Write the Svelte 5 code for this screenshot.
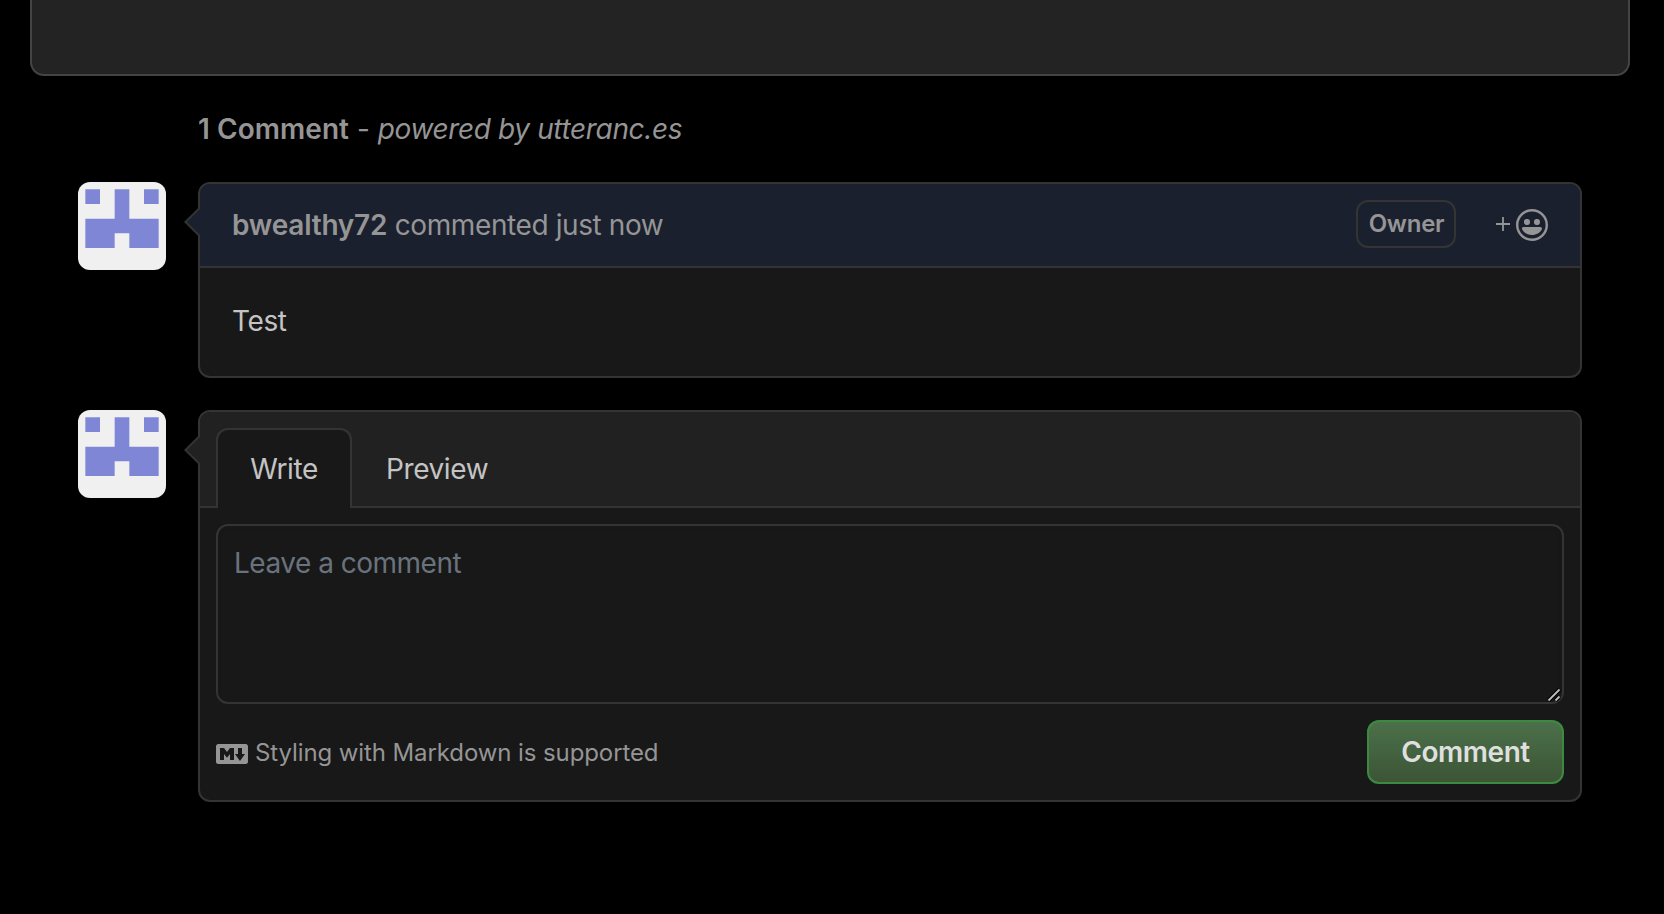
{#snippet avatar()}
  <svg class="avatar" viewBox="0 0 12 12" aria-hidden="true">
    <rect width="12" height="12" fill="#f0f0f0" />
    <path fill="#7f86d6" d="M1 1h2v2H1zM9 1h2v2H9zM5 1h2v4h4v4H7V7H5v2H1V5h4z" />
  </svg>
{/snippet}

{#snippet arrow(fill)}
  <svg class="arrow" width="16" height="30" viewBox="0 0 16 30" aria-hidden="true">
    <path d="M16 0.6L1.4 15L16 29.4" {fill} stroke="#343434" stroke-width="2" />
  </svg>
{/snippet}

<div class="page">
  <div class="article"></div>
  <main class="timeline">
    <h1><b>1 Comment</b> <span class="dash">-</span> <em>powered by utteranc.es</em></h1>

    <article class="entry">
      {@render avatar()}
      <div class="box">
        {@render arrow('#1b202f')}
        <header class="comment-header">
          <span class="meta"><b>bwealthy72</b> <span>commented just now</span></span>
          <span class="owner">Owner</span>
          <button class="react" aria-label="Add reaction">
            <svg width="14" height="14" viewBox="0 0 14 14"><path d="M6.1 0h1.8v6.1H14v1.8H7.9V14H6.1V7.9H0V6.1h6.1z" fill="currentColor" /></svg>
            <svg width="32" height="32" viewBox="0 0 16 16"><path fill="currentColor" d="M8 0C3.58 0 0 3.58 0 8s3.58 8 8 8 8-3.58 8-8-3.58-8-8-8zm4.81 12.81a6.72 6.72 0 0 1-2.17 1.45c-.83.36-1.72.53-2.64.53-.92 0-1.81-.17-2.64-.53-.81-.34-1.55-.83-2.17-1.45a6.773 6.773 0 0 1-1.45-2.17A6.59 6.59 0 0 1 1.21 8c0-.92.17-1.81.53-2.64.34-.81.83-1.55 1.45-2.17.62-.62 1.36-1.11 2.17-1.45A6.59 6.59 0 0 1 8 1.21c.92 0 1.81.17 2.64.53.81.34 1.55.83 2.17 1.45.62.62 1.11 1.36 1.45 2.17.36.83.53 1.72.53 2.64 0 .92-.17 1.81-.53 2.64-.34.81-.83 1.55-1.45 2.17zM4 6.8v-.59c0-.66.53-1.19 1.2-1.19h.59c.66 0 1.19.53 1.19 1.19v.59c0 .67-.53 1.2-1.19 1.2H5.2C4.53 8 4 7.47 4 6.8zm5 0v-.59c0-.66.53-1.19 1.2-1.19h.59c.66 0 1.19.53 1.19 1.19v.59c0 .67-.53 1.2-1.19 1.2h-.59C9.53 8 9 7.47 9 6.8zm4 3.2c-.72 1.88-2.91 3-5 3s-4.28-1.13-5-3c-.14-.39.23-1 .66-1h8.59c.41 0 .89.61.75 1z" /></svg>
          </button>
        </header>
        <div class="comment-body">Test</div>
      </div>
    </article>

    <article class="entry">
      {@render avatar()}
      <form class="box">
        {@render arrow('#212121')}
        <header class="tabs">
          <button type="button" class="tab active">Write</button>
          <button type="button" class="tab">Preview</button>
        </header>
        <div class="editor">
          <div class="field">
            <textarea placeholder="Leave a comment"></textarea>
            <svg class="grip" width="14" height="14" viewBox="0 0 14 14" aria-hidden="true"><path d="M1.5 12.5L12.5 1.5M8.5 12.5L12.5 8.5" stroke="#000" stroke-width="4" /><path d="M1.5 12.5L12.5 1.5M8.5 12.5L12.5 8.5" stroke="#bcbcbc" stroke-width="1.8" /></svg>
          </div>
          <footer>
            <span class="hint">
              <svg width="32" height="32" viewBox="0 0 16 16" aria-hidden="true"><path fill="currentColor" fill-rule="evenodd" d="M14.85 3H1.15C.52 3 0 3.52 0 4.15v7.69C0 12.48.52 13 1.15 13h13.69c.64 0 1.15-.52 1.15-1.15v-7.7C16 3.52 15.48 3 14.85 3zM9 11H7V8L5.5 9.92 4 8v3H2V5h2l1.5 2L7 5h2v6zm2.99.5L9.5 8H11V5h2v3h1.5l-2.51 3.5z" /></svg>
              <span>Styling with Markdown is supported</span>
            </span>
            <button type="button" class="submit">Comment</button>
          </footer>
        </div>
      </form>
    </article>
  </main>
</div>

<style>
  :global(body) { background: #000; }
  .page { box-sizing: border-box; height: 914px; overflow: hidden; padding: 0 34px 0 30px; background: #000; color: #c4c4c4; font: 28px/42px Inter, "Liberation Sans", sans-serif; letter-spacing: -0.4px; }
  .page :global(*) { box-sizing: border-box; }
  .article { height: 76px; background: #232323; border: 2px solid #444; border-top: 0; border-radius: 0 0 14px 14px; }
  .timeline { padding: 32px 48px 0; }
  h1 { margin: 0 0 32px 120px; height: 42px; font-size: 28px; font-weight: 400; line-height: 42px; color: #959595; white-space: nowrap; letter-spacing: 0; }
  h1 b { letter-spacing: 0.05px; }
  h1 em { letter-spacing: -0.36px; }
  b { font-weight: 600; letter-spacing: -0.22px; }
  .entry { display: flex; gap: 32px; align-items: flex-start; margin-bottom: 32px; }
  .avatar { display: block; width: 88px; height: 88px; border-radius: 12px; }
  .box { position: relative; flex: 1; margin: 0; background: #181818; border: 2px solid #343434; border-radius: 12px; }
  .arrow { position: absolute; left: -16px; top: 23px; }
  .comment-header { display: flex; align-items: center; height: 84px; padding: 0 32px; background: #1b202f; border-bottom: 2px solid #343434; border-radius: 10px 10px 0 0; color: #959595; }
  .meta { flex: 1; white-space: nowrap; }
  .owner { display: flex; align-items: center; justify-content: center; width: 100px; height: 48px; margin-bottom: 2px; padding-left: 1px; border: 2px solid #343434; border-radius: 12px; font-size: 24px; font-weight: 600; letter-spacing: -0.25px; }
  button { font: inherit; letter-spacing: inherit; color: inherit; background: none; border: 0; padding: 0; }
  .react { display: flex; align-items: center; gap: 6px; margin-left: 40px; }
  .react svg:first-child { margin-bottom: 2px; }
  .comment-body { height: 108px; padding: 32px; }
  .tabs { display: flex; height: 96px; padding: 16px 16px 0; background: #212121; border-radius: 10px 10px 0 0; border-bottom: 2px solid #343434; }
  .tab { height: 80px; padding: 2px 34px 0; }
  .tab.active { width: 136px; background: #181818; border: 2px solid #343434; border-bottom: 0; border-radius: 12px 12px 0 0; padding: 0; }
  .editor { padding: 16px; }
  .field { position: relative; height: 180px; }
  textarea { display: block; width: 100%; height: 100%; padding: 16px; resize: none; outline: 0; background: #181818; border: 2px solid #343434; border-radius: 12px; font: inherit; letter-spacing: -0.5px; color: #c4c4c4; box-shadow: inset 0 2px 4px rgba(24, 24, 24, 0.1); }
  textarea::placeholder { color: #6a737d; opacity: 1; }
  .grip { position: absolute; right: 3px; bottom: 2px; }
  footer { display: flex; align-items: center; justify-content: space-between; margin-top: 16px; }
  .hint { display: flex; align-items: center; gap: 7px; padding-top: 2px; color: #959595; font-size: 24px; letter-spacing: -0.1px; }
  .hint svg { margin-top: 2px; }
  .submit { width: 197px; height: 64px; border: 2px solid #3c8a42; border-radius: 12px; background: linear-gradient(#4b704a, #3c5535); color: #dfdfdf; font-weight: 600; letter-spacing: -0.45px; }
</style>
